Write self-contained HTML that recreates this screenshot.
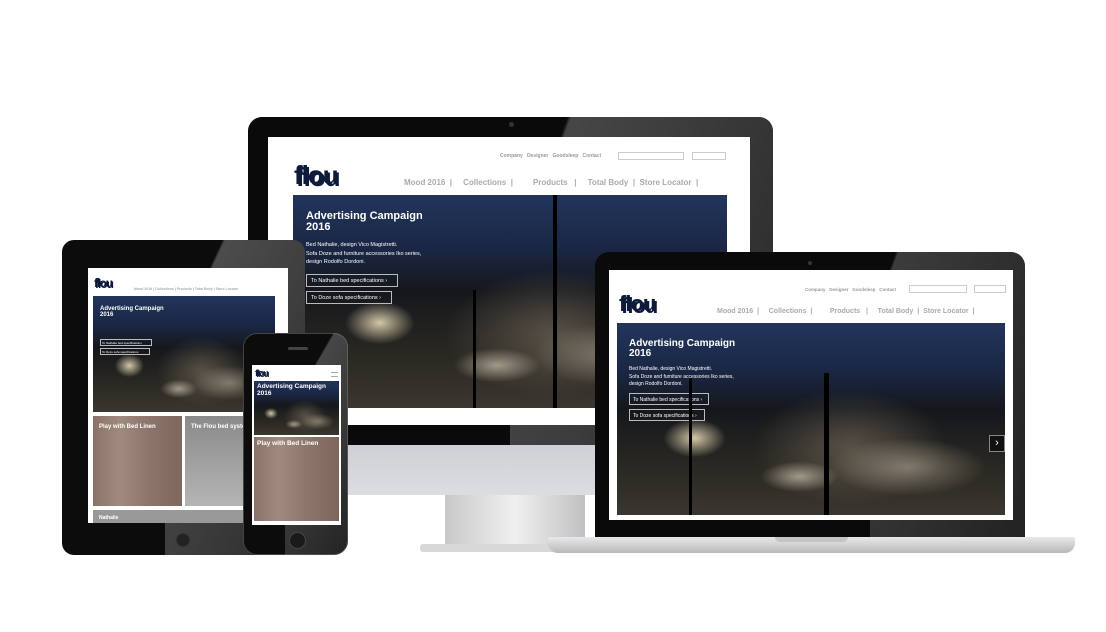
<!DOCTYPE html>
<html><head><meta charset="utf-8"><style>
*{margin:0;padding:0;box-sizing:border-box}
body{width:1106px;height:632px;background:#fff;position:relative;overflow:hidden;font-family:"Liberation Sans",sans-serif}
.a{position:absolute}
.hero{background:
 radial-gradient(ellipse 8% 10% at 20% 60%,rgba(255,240,200,.8),transparent),
 radial-gradient(ellipse 10% 8% at 47% 80%,rgba(230,220,200,.6),transparent),
 radial-gradient(ellipse 20% 15% at 75% 75%,rgba(200,190,170,.5),transparent),
 radial-gradient(ellipse 25% 30% at 60% 65%,rgba(110,100,85,.7),transparent),
 linear-gradient(180deg,#22355c 0%,#1a2744 25%,#15171c 45%,#2a2822 75%,#3a3630 100%);overflow:hidden;color:#fff}
.logo{font-family:"Liberation Sans",sans-serif;font-weight:bold;color:#0e1a3a;letter-spacing:-1px;text-shadow:2px 2px 0 #0e1a3a}
.nav{color:#aaa;font-weight:bold;white-space:nowrap}
.btn{border:1px solid #bbb;color:#fff;white-space:nowrap}
.linen{background:linear-gradient(90deg,#8a7268,#a08a80 30%,#8e766c 60%,#7d665c)}
</style></head><body>

<!-- iMac -->
<div class="a" style="left:248px;top:117px;width:525px;height:330px;background:#0a0a0a;border-radius:14px 14px 0 0"></div>
<div class="a" style="left:510px;top:117px;width:263px;height:330px;background:linear-gradient(110deg,transparent 0,transparent 15%,rgba(120,120,120,.55) 16%,rgba(90,90,90,.4) 100%);border-radius:0 14px 0 0"></div>
<div class="a" style="left:509px;top:122px;width:5px;height:5px;border-radius:50%;background:#333"></div>
<div class="a" style="left:268px;top:137px;width:482px;height:288px;background:#fff"></div>
<div class="a logo" style="left:294px;top:160px;font-size:26px">flou</div>
<div class="a nav" style="left:500px;top:153px;font-size:5px;color:#999">Company &nbsp; Designer &nbsp; Goodsleep &nbsp; Contact</div>
<div class="a" style="left:618px;top:152px;width:66px;height:8px;border:1px solid #ccc"></div>
<div class="a" style="left:692px;top:152px;width:34px;height:8px;border:1px solid #ccc"></div>
<div class="a nav" style="left:404px;top:178px;font-size:8px;word-spacing:0">Mood 2016 &nbsp;| &nbsp; &nbsp; Collections &nbsp;| &nbsp; &nbsp; &nbsp; &nbsp; Products &nbsp; | &nbsp; &nbsp; Total Body &nbsp;| &nbsp;Store Locator &nbsp;|</div>
<div class="a hero" style="left:293px;top:195px;width:434px;height:213px">
 <div class="a" style="left:13px;top:16px;font-size:11px;font-weight:bold;line-height:11px">Advertising Campaign<br>2016</div>
 <div class="a" style="left:13px;top:46px;font-size:5.5px;line-height:8.5px">Bed Nathalie, design Vico Magistretti.<br>Sofa Doze and furniture accessories Iko series,<br>design Rodolfo Dordoni.</div>
 <div class="a btn" style="left:13px;top:79px;width:92px;height:13px;font-size:5.5px;padding:3px 4px">To Nathalie bed specifications ›</div>
 <div class="a btn" style="left:13px;top:96px;width:86px;height:13px;font-size:5.5px;padding:3px 4px">To Doze sofa specifications ›</div>
 <div class="a" style="left:260px;top:0;width:4px;height:213px;background:#000"></div>
 <div class="a" style="left:180px;top:95px;width:3px;height:118px;background:#000"></div>
</div>
<div class="a" style="left:248px;top:445px;width:525px;height:50px;background:linear-gradient(#cfd0d3,#dcdde0)"></div>
<div class="a" style="left:445px;top:495px;width:140px;height:50px;background:linear-gradient(90deg,#c8c8ca,#f0f0f0 50%,#c0c0c2)"></div>
<div class="a" style="left:420px;top:544px;width:190px;height:8px;background:#d8d8da;border-radius:3px"></div>

<!-- Laptop -->
<div class="a" style="left:595px;top:252px;width:430px;height:285px;background:#0a0a0a;border-radius:14px 14px 0 0"></div>
<div class="a" style="left:870px;top:252px;width:155px;height:285px;background:linear-gradient(110deg,transparent 10%,rgba(120,120,120,.45) 11%,rgba(80,80,80,.35));border-radius:0 14px 0 0"></div>
<div class="a" style="left:808px;top:261px;width:4px;height:4px;border-radius:50%;background:#334"></div>
<div class="a" style="left:609px;top:270px;width:404px;height:250px;background:#fff"></div>
<div class="a logo" style="left:619px;top:291px;font-size:22px">flou</div>
<div class="a nav" style="left:805px;top:287px;font-size:4.5px;color:#999">Company &nbsp; Designer &nbsp; Goodsleep &nbsp; Contact</div>
<div class="a" style="left:909px;top:285px;width:58px;height:8px;border:1px solid #ccc"></div>
<div class="a" style="left:974px;top:285px;width:32px;height:8px;border:1px solid #ccc"></div>
<div class="a nav" style="left:717px;top:308px;font-size:7px">Mood 2016 &nbsp;| &nbsp; &nbsp; Collections &nbsp;| &nbsp; &nbsp; &nbsp; &nbsp; Products &nbsp; | &nbsp; &nbsp; Total Body &nbsp;| &nbsp;Store Locator &nbsp;|</div>
<div class="a hero" style="left:617px;top:323px;width:388px;height:192px">
 <div class="a" style="left:12px;top:16px;font-size:10px;font-weight:bold;line-height:10px">Advertising Campaign<br>2016</div>
 <div class="a" style="left:12px;top:43px;font-size:5px;line-height:7.5px">Bed Nathalie, design Vico Magistretti.<br>Sofa Doze and furniture accessories Iko series,<br>design Rodolfo Dordoni.</div>
 <div class="a btn" style="left:12px;top:70px;width:80px;height:12px;font-size:5px;padding:3px 3px">To Nathalie bed specifications ›</div>
 <div class="a btn" style="left:12px;top:86px;width:76px;height:12px;font-size:5px;padding:3px 3px">To Doze sofa specifications ›</div>
 <div class="a" style="left:72px;top:55px;width:3px;height:137px;background:#000"></div>
 <div class="a" style="left:207px;top:50px;width:5px;height:142px;background:#000"></div>
 <div class="a" style="left:372px;top:112px;width:16px;height:17px;border:1px solid #888;background:#111;font-size:11px;text-align:center;line-height:14px">›</div>
</div>
<div class="a" style="left:548px;top:537px;width:527px;height:16px;background:linear-gradient(#e8e8ea,#b8b8bc);border-radius:2px 2px 10px 10px"></div>
<div class="a" style="left:775px;top:537px;width:73px;height:5px;background:#c4c4c8;border-radius:0 0 5px 5px"></div>

<!-- iPad -->
<div class="a" style="left:62px;top:240px;width:243px;height:315px;background:#0c0c0c;border-radius:12px"></div>
<div class="a" style="left:165px;top:240px;width:140px;height:315px;background:linear-gradient(115deg,transparent 20%,rgba(140,140,140,.5) 21%,rgba(100,100,100,.35));border-radius:0 12px 12px 0"></div>
<div class="a" style="left:88px;top:268px;width:200px;height:255px;background:#fff;overflow:hidden">
 <div class="a logo" style="left:6px;top:8px;font-size:12px;text-shadow:1px 1px 0 #0e1a3a">flou</div>
 <div class="a nav" style="left:46px;top:19px;font-size:3.5px">Mood 2016 | Collections | Products | Total Body | Store Locator</div>
 <div class="a hero" style="left:5px;top:28px;width:182px;height:116px">
  <div class="a" style="left:7px;top:10px;font-size:6px;font-weight:bold">Advertising Campaign<br>2016</div>
  <div class="a btn" style="left:7px;top:43px;width:52px;height:7px;font-size:3px;padding:1px">To Nathalie bed specifications</div>
  <div class="a btn" style="left:7px;top:52px;width:50px;height:7px;font-size:3px;padding:1px">To Doze sofa specifications</div>
 </div>
 <div class="a linen" style="left:5px;top:148px;width:89px;height:90px"><div class="a" style="left:6px;top:8px;color:#fff;font-size:6px;font-weight:bold">Play with Bed Linen</div></div>
 <div class="a" style="left:97px;top:148px;width:95px;height:90px;background:linear-gradient(#8a8a8a,#b5b5b5)"><div class="a" style="left:6px;top:8px;color:#fff;font-size:6px;font-weight:bold">The Flou bed system</div></div>
 <div class="a" style="left:5px;top:242px;width:190px;height:20px;background:#999"><div class="a" style="left:6px;top:5px;color:#fff;font-size:5px;font-weight:bold">Nathalie</div></div>
</div>
<div class="a" style="left:176px;top:533px;width:14px;height:14px;border-radius:50%;background:#222;border:1px solid #333"></div>

<!-- iPhone -->
<div class="a" style="left:243px;top:333px;width:105px;height:222px;background:#0c0c0c;border-radius:14px;border:1px solid #444"></div>
<div class="a" style="left:285px;top:333px;width:63px;height:222px;background:linear-gradient(120deg,transparent 25%,rgba(130,130,130,.5) 26%,rgba(90,90,90,.3));border-radius:0 14px 14px 0"></div>
<div class="a" style="left:288px;top:347px;width:20px;height:3px;border-radius:2px;background:#444"></div>
<div class="a" style="left:252px;top:365px;width:89px;height:160px;background:#fff;overflow:hidden">
 <div class="a logo" style="left:3px;top:3px;font-size:9px;text-shadow:1px 1px 0 #0e1a3a">flou</div>
 <div class="a" style="left:79px;top:7px;width:7px;height:5px;border-top:1px solid #aaa;border-bottom:1px solid #aaa"></div>
 <div class="a hero" style="left:2px;top:16px;width:85px;height:54px"><div class="a" style="left:3px;top:3px;font-size:6.5px;font-weight:bold;line-height:6.5px">Advertising Campaign<br>2016</div></div>
 <div class="a linen" style="left:2px;top:72px;width:85px;height:84px"><div class="a" style="left:3px;top:3px;color:#fff;font-size:6.5px;font-weight:bold">Play with Bed Linen</div></div>
</div>
<div class="a" style="left:289px;top:532px;width:17px;height:17px;border-radius:50%;background:#1a1a1a;border:1px solid #444"></div>
</body></html>
